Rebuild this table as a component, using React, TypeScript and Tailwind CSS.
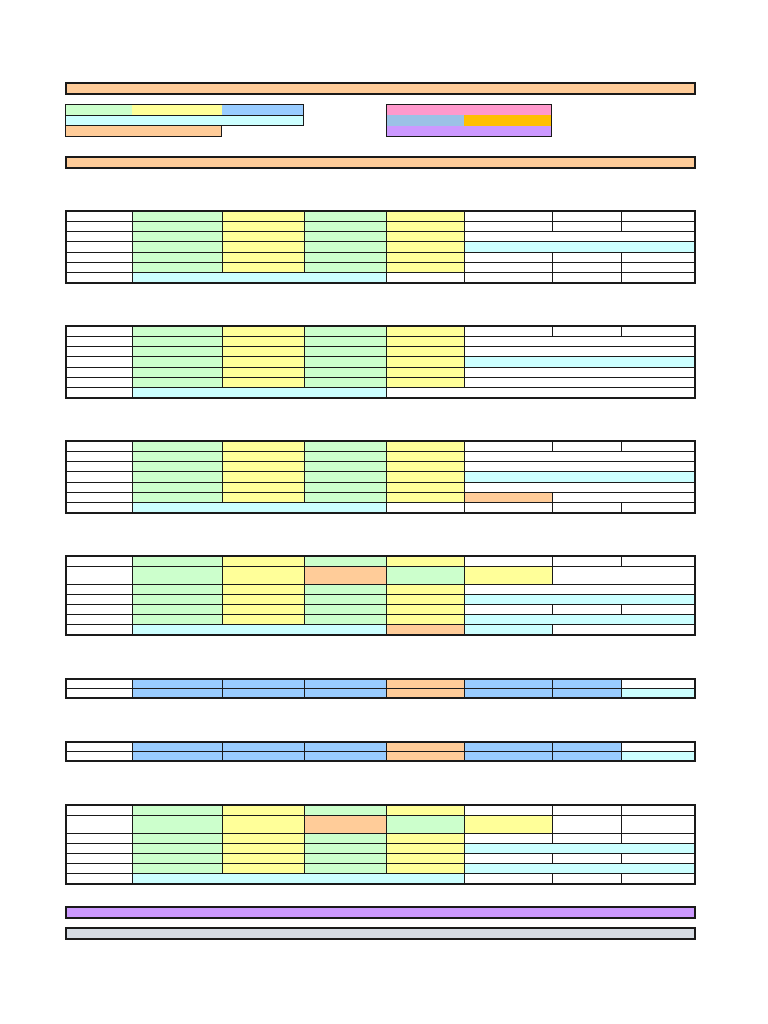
const COLORS: Record<string, string> = {
  w: "bg-white",
  g: "bg-[#CCFFCC]",
  y: "bg-[#FFFF99]",
  c: "bg-[#CCFFFF]",
  o: "bg-[#FFCC99]",
  b: "bg-[#99CCFF]",
}

const SPANS: Record<number, string> = {
  1: "col-span-1",
  2: "col-span-2",
  3: "col-span-3",
  4: "col-span-4",
}

// each cell: colour key, optional span digit ("c3" = cyan across 3 columns)
type Row = string[]

const std = (tail: string[]): Row => ["w", "g", "y", "g", "y", ...tail]
const tall = (tail: string[]): Row => ["w", "g", "y", "o", "g", "y", ...tail]

const table1: Row[] = [
  std(["w", "w", "w"]),
  std(["w", "w", "w"]),
  std(["w3"]),
  std(["c3"]),
  std(["w", "w", "w"]),
  std(["w", "w", "w"]),
  ["w", "c3", "w", "w", "w", "w"],
]

const table2: Row[] = [
  std(["w", "w", "w"]),
  std(["w3"]),
  std(["w3"]),
  std(["c3"]),
  std(["w3"]),
  std(["w3"]),
  ["w", "c3", "w4"],
]

const table3: Row[] = [
  std(["w", "w", "w"]),
  std(["w3"]),
  std(["w3"]),
  std(["c3"]),
  std(["w3"]),
  std(["o", "w2"]),
  ["w", "c3", "w", "w", "w", "w"],
]

const table4: Row[] = [
  std(["w", "w", "w"]),
  tall(["w2"]),
  std(["w3"]),
  std(["c3"]),
  std(["w", "w", "w"]),
  std(["c3"]),
  ["w", "c3", "o", "c", "w2"],
]

const blueRows: Row[] = [
  ["w", "b", "b", "b", "o", "b", "b", "w"],
  ["w", "b", "b", "b", "o", "b", "b", "c"],
]

const table7: Row[] = [
  std(["w", "w", "w"]),
  tall(["w", "w"]),
  std(["w", "w", "w"]),
  std(["c3"]),
  std(["w", "w", "w"]),
  std(["c3"]),
  ["w", "c4", "w", "w", "w"],
]

function Sheet({ rows, rowsClass }: { rows: Row[]; rowsClass: string }) {
  return (
    <div
      className={`grid w-[631px] grid-cols-[65px_89px_81px_81px_77px_87px_68px_72px] gap-px border-2 border-[#1a1a1a] bg-[#1a1a1a] ${rowsClass}`}
    >
      {rows.flatMap((row, r) =>
        row.map((cell, i) => {
          const span = cell.length > 1 ? Number(cell[1]) : 1
          return <div key={`${r}-${i}`} className={`${COLORS[cell[0]]} ${SPANS[span]}`} />
        })
      )}
    </div>
  )
}

function Bar({ color }: { color: string }) {
  return <div className={`h-[13px] w-[631px] border-2 border-[#1a1a1a] ${color}`} />
}

export default function App() {
  return (
    <div className="min-h-[1024px] w-[768px] bg-white pl-[65px] pt-[82px]">
      <Bar color="bg-[#FFCC99]" />

      <div className="mt-[9px] flex items-start gap-[82px]">
        <div className="flex flex-col">
          <div className="flex h-[22px] w-[239px] flex-col border border-[#1a1a1a]">
            <div className="flex h-[10px]">
              <div className="w-[66px] bg-[#CCFFCC]" />
              <div className="w-[90px] bg-[#FFFF99]" />
              <div className="flex-1 bg-[#99CCFF]" />
            </div>
            <div className="flex-1 border-t border-[#1a1a1a] bg-[#CCFFFF]" />
          </div>
          <div className="h-[11px] w-[157px] border border-t-0 border-[#1a1a1a] bg-[#FFCC99]" />
        </div>

        <div className="flex h-[33px] w-[166px] flex-col border border-[#1a1a1a]">
          <div className="h-[10px] bg-[#FF99CC]" />
          <div className="flex h-[11px]">
            <div className="w-[77px] bg-[#9BC2E6]" />
            <div className="flex-1 bg-[#FFC000]" />
          </div>
          <div className="flex-1 bg-[#CC99FF]" />
        </div>
      </div>

      <div className="mt-[19px]">
        <Bar color="bg-[#FFCC99]" />
      </div>

      <div className="mt-[41px]">
        <Sheet rows={table1} rowsClass="grid-rows-[9px_9px_9px_10px_9px_9px_9px]" />
      </div>
      <div className="mt-[41px]">
        <Sheet rows={table2} rowsClass="grid-rows-[9px_9px_9px_10px_9px_9px_9px]" />
      </div>
      <div className="mt-[41px]">
        <Sheet rows={table3} rowsClass="grid-rows-[9px_9px_9px_10px_9px_9px_9px]" />
      </div>
      <div className="mt-[41px]">
        <Sheet rows={table4} rowsClass="grid-rows-[9px_17px_9px_9px_9px_9px_9px]" />
      </div>
      <div className="mt-[42px]">
        <Sheet rows={blueRows} rowsClass="grid-rows-[8px_8px]" />
      </div>
      <div className="mt-[42px]">
        <Sheet rows={blueRows} rowsClass="grid-rows-[8px_8px]" />
      </div>
      <div className="mt-[42px]">
        <Sheet rows={table7} rowsClass="grid-rows-[9px_17px_9px_9px_9px_9px_9px]" />
      </div>

      <div className="mt-[21px]">
        <Bar color="bg-[#CC99FF]" />
      </div>
      <div className="mt-[8px]">
        <Bar color="bg-[#D6DCE4]" />
      </div>
    </div>
  )
}
